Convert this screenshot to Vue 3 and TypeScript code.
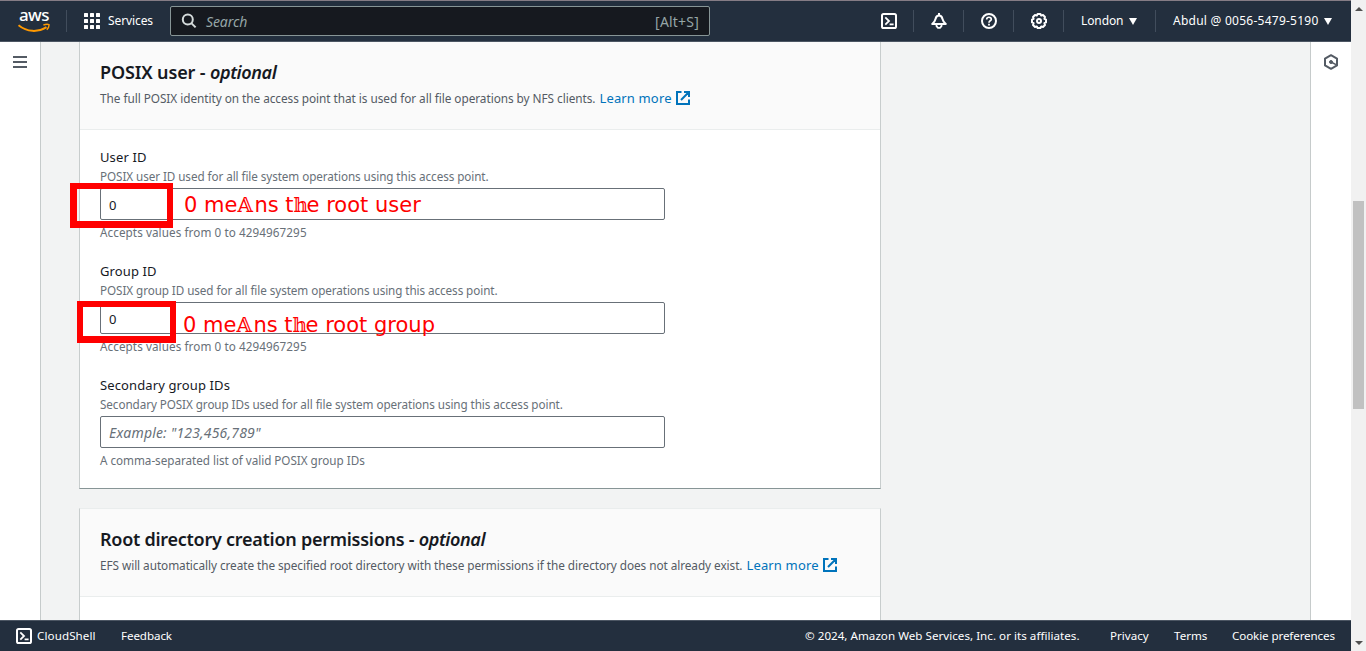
<script setup lang="ts">
interface Field {
  id: string
  label: string
  hint: string
  value: string
  placeholder: string
  constraint: string
}

const fields: Field[] = [
  {
    id: 'user',
    label: 'User ID',
    hint: 'POSIX user ID used for all file system operations using this access point.',
    value: '0',
    placeholder: '',
    constraint: 'Accepts values from 0 to 4294967295',
  },
  {
    id: 'group',
    label: 'Group ID',
    hint: 'POSIX group ID used for all file system operations using this access point.',
    value: '0',
    placeholder: '',
    constraint: 'Accepts values from 0 to 4294967295',
  },
  {
    id: 'secondary',
    label: 'Secondary group IDs',
    hint: 'Secondary POSIX group IDs used for all file system operations using this access point.',
    value: '',
    placeholder: 'Example: "123,456,789"',
    constraint: 'A comma-separated list of valid POSIX group IDs',
  },
]
</script>

<template>
  <div class="window">
    <div class="page">
      <header class="topbar">
        <div class="aws">
          <span class="aws-word">aws</span>
          <svg viewBox="0 0 34 10" width="34" height="10" fill="none" stroke="#f90">
            <path d="M.5 2.200C9 9.300 20 9.500 28.500 4.200" stroke-width="2" />
            <path d="M25.400 2C28 1 29.800 1 31 1.600C31.200 3.200 30.400 5.200 28.800 6.800" stroke-width="1.400" />
          </svg>
        </div>
        <i class="sep sep-logo"></i>
        <svg viewBox="0 0 16 16" width="16" height="16" fill="#fff">
          <template v-for="r in 3" :key="r">
            <rect v-for="c in 3" :key="c" :x="(c - 1) * 6" :y="(r - 1) * 6" width="4" height="4" rx=".5" />
          </template>
        </svg>
        <span class="t services">Services</span>
        <div class="search">
          <svg viewBox="0 0 16 16" width="16" height="16" fill="none" stroke="#d5dbdb" stroke-width="2">
            <circle cx="6.8" cy="6.5" r="5" />
            <path d="M10.300 10.100L14.600 14.400" />
          </svg>
          <span class="t search-ph">Search</span>
          <span class="t shortcut">[Alt+S]</span>
        </div>
        <nav class="tools">
          <span class="tool">
            <svg viewBox="0 0 16 16" width="16" height="16" fill="none" stroke="#fff" stroke-width="2">
              <rect x="1" y="1" width="14" height="14" rx="1.600" />
              <path d="M4.300 4.400L8 8L4.300 11.600M8.600 11.400H12.600" stroke-width="1.800" />
            </svg>
          </span>
          <i class="sep"></i>
          <span class="tool">
            <svg viewBox="0 0 16 16" width="16" height="16" fill="none" stroke="#fff" stroke-width="2" stroke-linejoin="round">
              <path d="M8 0V2.400M1.200 11C3.400 9.400 4 8.200 4.500 6C5 3.800 6 2.600 8 2.600S11 3.800 11.500 6C12 8.200 12.600 9.400 14.800 11Z" />
              <path d="M5.500 12V13.200L7 14.800H9L10.500 13.200V12" stroke-width="1.800" />
            </svg>
          </span>
          <i class="sep"></i>
          <span class="tool">
            <svg viewBox="0 0 16 16" width="16" height="16" fill="none" stroke="#fff" stroke-width="2">
              <circle cx="8" cy="8" r="7" />
              <path d="M5.700 6.400C5.700 3.500 10.300 3.600 10.300 6.200C10.300 7.900 8 7.700 8 9.700" stroke-width="1.700" />
              <path d="M8 10.800V12.500" stroke-width="1.800" />
            </svg>
          </span>
          <i class="sep"></i>
          <span class="tool">
            <svg viewBox="0 0 16 16" width="16" height="16" fill="none" stroke="#fff" stroke-width="2" stroke-linejoin="round">
              <path d="M6.600 1H9.400L10.200 2.600L12 2L14 4L13.400 5.800L15 6.600V9.400L13.400 10.200L14 12L12 14L10.200 13.400L9.400 15H6.600L5.800 13.400L4 14L2 12L2.600 10.200L1 9.400V6.600L2.600 5.800L2 4L4 2L5.800 2.600Z" />
              <circle cx="8" cy="8" r="2" />
            </svg>
          </span>
          <i class="sep"></i>
          <span class="menu region">
            <span class="t london">London</span>
            <svg viewBox="0 0 8 7" width="8" height="7"><path d="M0 0H8L4 7Z" fill="#fff" /></svg>
          </span>
          <i class="sep"></i>
          <span class="menu account">
            <span class="t acct">Abdul @ 0056-5479-5190</span>
            <svg viewBox="0 0 8 7" width="8" height="7"><path d="M0 0H8L4 7Z" fill="#fff" /></svg>
          </span>
        </nav>
      </header>

      <div class="body">
        <aside class="rail left">
          <svg viewBox="0 0 14 12" width="14" height="12" fill="#545b64">
            <rect width="14" height="2" />
            <rect y="5" width="14" height="2" />
            <rect y="10" width="14" height="2" />
          </svg>
        </aside>
        <main class="content">
          <section class="card first">
            <div class="card-head">
              <h2><span class="t title-posix">POSIX user - </span><em class="t opt">optional</em></h2>
              <p>
                <span class="t desc-posix">The full POSIX identity on the access point that is used for all file operations by NFS clients.</span>
                <a class="t link">Learn more</a>
                <svg viewBox="0 0 14 14" width="14" height="14" fill="none" stroke="#0073bb" stroke-width="2">
                  <path d="M5.500 1H1V13H13V8.500M8 1H13V6M12.700 1.300L5 9" />
                </svg>
              </p>
            </div>
            <div class="card-body">
              <div v-for="f in fields" :key="f.id" class="field">
                <label>{{ f.label }}</label>
                <div class="hint">{{ f.hint }}</div>
                <div class="input">
                  <span v-if="f.value">{{ f.value }}</span>
                  <span v-else class="t placeholder">{{ f.placeholder }}</span>
                </div>
                <div class="constraint" :class="{ wordy: f.id === 'secondary' }">{{ f.constraint }}</div>
              </div>
            </div>
          </section>
          <section class="card second">
            <div class="card-head">
              <h2><span class="t title-root">Root directory creation permissions - </span><em class="t opt">optional</em></h2>
              <p>
                <span class="t desc-root">EFS will automatically create the specified root directory with these permissions if the directory does not already exist.</span>
                <a class="t link">Learn more</a>
                <svg viewBox="0 0 14 14" width="14" height="14" fill="none" stroke="#0073bb" stroke-width="2">
                  <path d="M5.500 1H1V13H13V8.500M8 1H13V6M12.700 1.300L5 9" />
                </svg>
              </p>
            </div>
          </section>
        </main>
        <aside class="rail right">
          <svg viewBox="0 0 16 16" width="16" height="16" fill="none" stroke="#545b64" stroke-width="2">
            <path d="M8 1.200L14 4.600V11.400L8 14.800L2 11.400V4.600Z" stroke-linejoin="round" />
            <circle cx="8" cy="8" r="1.500" fill="#545b64" stroke-width="1" />
            <path d="M8.500 8.300L13 10.600" stroke-width="1.600" />
          </svg>
        </aside>
      </div>

      <footer class="bottombar">
        <svg viewBox="0 0 16 16" width="16" height="16" fill="none" stroke="#fff" stroke-width="2">
          <rect x="1" y="1" width="14" height="14" rx="1.600" />
          <path d="M4.300 4.400L8 8L4.300 11.600M8.600 11.400H12.600" stroke-width="1.800" />
        </svg>
        <span class="t cloud">CloudShell</span>
        <span class="t feedback">Feedback</span>
        <div class="legal">
          <span class="t copy">© 2024, Amazon Web Services, Inc. or its affiliates.</span>
          <span class="t privacy">Privacy</span>
          <span class="t terms">Terms</span>
          <span class="t cookie">Cookie preferences</span>
        </div>
      </footer>
    </div>

    <div class="scrollbar">
      <svg viewBox="0 0 8 4" width="8" height="4"><path d="M0 4H8L4 0Z" fill="#505050" /></svg>
      <div class="thumb"></div>
      <svg viewBox="0 0 8 4" width="8" height="4"><path d="M0 0H8L4 4Z" fill="#505050" /></svg>
    </div>

    <div class="mark mark-user"></div>
    <div class="mark mark-group"></div>
    <div class="note note-user">0 me<i class="math cap">𝔸</i>ns t<i class="math">𝕙</i>e root user</div>
    <div class="note note-group">0 me<i class="math cap">𝔸</i>ns t<i class="math">𝕙</i>e root group</div>
  </div>
</template>

<style>
body {
  margin: 0;
  overflow: hidden;
}
</style>

<style scoped>
.window {
  position: relative;
  display: flex;
  width: 1366px;
  height: 651px;
  overflow: hidden;
  font-family: 'Noto Sans', 'Open Sans', sans-serif;
  color: #16191f;
}
.window svg {
  display: block;
  flex: none;
}
.t {
  white-space: pre;
}
.page {
  display: flex;
  flex-direction: column;
  width: 1351px;
}
.topbar {
  display: flex;
  align-items: center;
  box-sizing: border-box;
  height: 42px;
  flex: none;
  border-top: 1px solid #857c85;
  border-bottom: 1px solid #4c5663;
  background: #232f3e;
  color: #fff;
  font-size: 12px;
}
.aws {
  display: flex;
  flex-direction: column;
  width: 34px;
  height: 26px;
  margin: -2px 0 0 18px;
}
.aws-word {
  height: 16px;
  padding-left: 1px;
  font-size: 17px;
  font-weight: 500;
  line-height: 16px;
  letter-spacing: -0.6px;
}
.sep {
  width: 1px;
  height: 22px;
  flex: none;
  background: #414d5c;
}
.sep-logo {
  margin: 0 17px 0 14px;
}
.services {
  width: 46px;
  margin: -1px 0 0 8px;
  letter-spacing: -0.1px;
}
.search {
  display: flex;
  align-items: center;
  box-sizing: border-box;
  width: 540px;
  height: 30px;
  margin-left: 16px;
  padding: 0 10px;
  border: 1px solid #879596;
  border-radius: 2px;
  background: #16191f;
  color: #95a5a6;
  font-size: 14px;
}
.search-ph {
  margin: 1px 0 0 9px;
  font-style: italic;
  letter-spacing: -0.1px;
}
.shortcut {
  margin: 1px 0 0 auto;
  letter-spacing: 0.2px;
}
.tools {
  display: flex;
  align-items: center;
  margin-left: auto;
}
.tool {
  display: flex;
  justify-content: center;
  width: 49px;
}
.menu {
  display: flex;
  align-items: center;
}
.region {
  width: 91px;
}
.london {
  width: 48px;
  margin: -1px 0 0 17px;
  letter-spacing: -0.1px;
}
.account {
  width: 195px;
}
.acct {
  width: 151px;
  margin: -1px 0 0 17px;
  letter-spacing: 0.25px;
}
.body {
  display: flex;
  height: 578px;
  background: #f2f3f3;
}
.rail {
  display: flex;
  justify-content: center;
  box-sizing: border-box;
  width: 41px;
  background: #fff;
}
.left {
  padding-top: 14px;
  border-right: 1px solid #c6cbcb;
}
.right {
  padding-top: 12px;
  border-left: 1px solid #c6cbcb;
}
.content {
  flex: 1;
  padding-left: 38px;
  overflow: hidden;
}
.card {
  box-sizing: border-box;
  width: 802px;
  border: 1px solid #c8cdcd;
  border-top-color: #eaeded;
  background: #fff;
}
.first {
  height: 447px;
  border-top: 0;
  border-bottom-color: #879596;
}
.second {
  height: 140px;
  margin-top: 19px;
}
.card-head {
  box-sizing: border-box;
  height: 88px;
  padding: 18px 20px 0;
  border-bottom: 1px solid #eaeded;
  background: #fafafa;
}
h2 {
  margin: 0;
  font-size: 18px;
  font-weight: 600;
  line-height: 24px;
}
.title-posix {
  letter-spacing: -0.14px;
}
.title-root {
  letter-spacing: -0.26px;
}
.opt {
  letter-spacing: -0.4px;
}
.card-head p {
  display: flex;
  align-items: center;
  gap: 4px;
  height: 20px;
  margin: 4px 0 0;
  color: #545b64;
  font-size: 11.8px;
}
.desc-posix {
  letter-spacing: -0.045px;
}
.desc-root {
  letter-spacing: -0.066px;
}
.link {
  color: #0073bb;
  font-size: 13px;
  letter-spacing: 0.15px;
}
.card-body {
  display: flex;
  flex-direction: column;
  gap: 20px;
  padding: 17px 20px 0;
}
.field {
  width: 565px;
}
.field label {
  display: block;
  font-size: 13px;
  line-height: 20px;
  letter-spacing: 0.12px;
}
.hint,
.constraint {
  color: #687078;
  font-size: 11.7px;
  line-height: 18px;
}
.hint {
  letter-spacing: -0.075px;
}
.constraint {
  letter-spacing: 0.08px;
}
.constraint.wordy {
  letter-spacing: -0.03px;
}
.input {
  box-sizing: border-box;
  height: 32px;
  margin: 3px 0;
  padding-left: 8px;
  border: 1px solid #687078;
  border-radius: 2px;
  font-size: 13px;
  line-height: 32px;
}
.placeholder {
  color: #687078;
  font-size: 14px;
  font-style: italic;
  letter-spacing: 0.18px;
}
.bottombar {
  display: flex;
  align-items: center;
  box-sizing: border-box;
  height: 31px;
  padding: 0 16px;
  border-top: 1px solid #4c5663;
  background: #232f3e;
  color: #fff;
  font-size: 11.6px;
}
.bottombar .t {
  margin-top: -2px;
}
.cloud {
  width: 59px;
  margin-left: 5px;
  letter-spacing: 0.1px;
}
.feedback {
  margin-left: 25px;
  letter-spacing: -0.08px;
}
.legal {
  display: flex;
  margin-left: auto;
}
.copy {
  width: 305px;
  letter-spacing: 0.03px;
}
.privacy {
  width: 64px;
}
.terms {
  width: 58px;
}
.cookie {
  width: 103px;
  letter-spacing: -0.1px;
}
.scrollbar {
  display: flex;
  flex-direction: column;
  align-items: center;
  box-sizing: border-box;
  width: 15px;
  padding: 7px 0 6px;
  background: #f1f1f1;
}
.thumb {
  width: 11px;
  height: 208px;
  margin: 190px 0 auto;
  background: #c1c1c1;
}
.mark {
  position: absolute;
  box-sizing: border-box;
  border: 6px solid #f00;
}
.mark-user {
  left: 70px;
  top: 183px;
  width: 103px;
  height: 45px;
  border-width: 6px 6px 7px 7px;
}
.mark-group {
  left: 77px;
  top: 301px;
  width: 99px;
  height: 42px;
  border-bottom-width: 7px;
}
.note {
  position: absolute;
  color: #f00;
  font-family: 'DejaVu Sans', sans-serif;
  font-size: 21px;
  line-height: 26px;
  white-space: pre;
}
.note-user {
  left: 184px;
  top: 192px;
}
.note-group {
  left: 183px;
  top: 312px;
}
.math {
  display: inline-block;
  width: 13px;
  height: 26px;
  font-family: 'DejaVu Serif', 'DejaVu Math TeX Gyre', serif;
  font-style: normal;
  font-size: 20px;
  vertical-align: top;
}
.math.cap {
  width: 17px;
}
</style>
